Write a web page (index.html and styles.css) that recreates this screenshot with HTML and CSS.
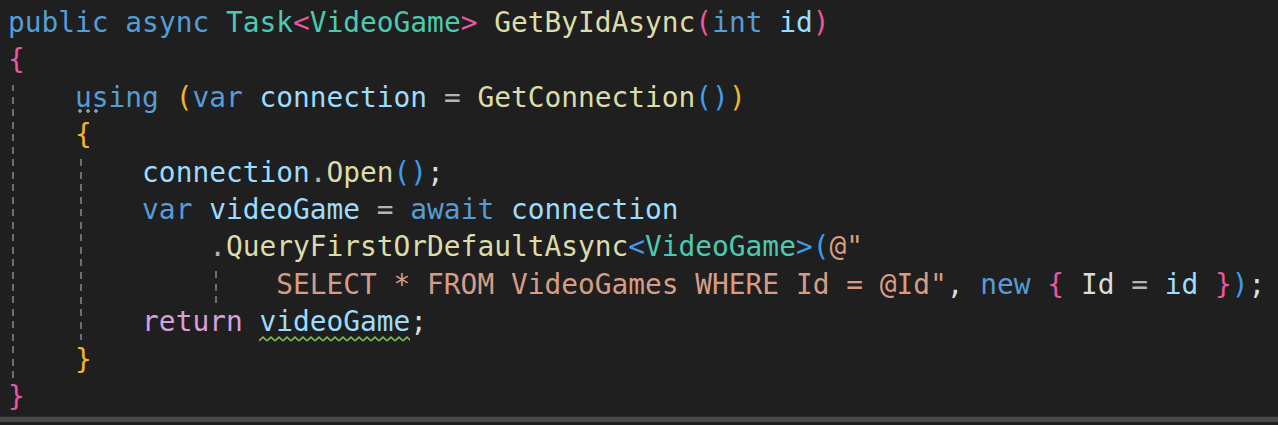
FILE: index.html
```html
<!DOCTYPE html>
<html lang="en">
<head>
  <meta charset="UTF-8" />
  <meta name="viewport" content="width=device-width, initial-scale=1.0"/>
  <title>VideoGameRepository.cs</title>
  <link rel="stylesheet" href="styles.css">
</head>
<body>

  <div class="editor">
    <!-- indent guides -->
    <div class="guide guide-1"></div>
    <div class="guide guide-2"></div>
    <div class="guide guide-3"></div>

    <div class="code">
<div class="line"><span class="kw">public</span> <span class="kw">async</span> <span class="type">Task</span><span class="b1">&lt;</span><span class="type">VideoGame</span><span class="b1">&gt;</span> <span class="fn">GetByIdAsync</span><span class="b1">(</span><span class="kw">int</span> <span class="var">id</span><span class="b1">)</span></div>
<div class="line"><span class="b1">{</span></div>
<div class="line">    <span class="kw hint">using</span> <span class="b2">(</span><span class="kw">var</span> <span class="var">connection</span> <span class="op">=</span> <span class="fn">GetConnection</span><span class="b3">()</span><span class="b2">)</span></div>
<div class="line">    <span class="b2">{</span></div>
<div class="line">        <span class="var">connection</span><span class="op">.</span><span class="fn">Open</span><span class="b3">()</span><span class="pn">;</span></div>
<div class="line">        <span class="kw">var</span> <span class="var">videoGame</span> <span class="op">=</span> <span class="kw">await</span> <span class="var">connection</span></div>
<div class="line">            <span class="op">.</span><span class="fn">QueryFirstOrDefaultAsync</span><span class="b3">&lt;</span><span class="type">VideoGame</span><span class="b3">&gt;(</span><span class="str">@"</span></div>
<div class="line">                <span class="str">SELECT * FROM VideoGames WHERE Id = @Id"</span><span class="pn">,</span> <span class="kw">new</span> <span class="b1">{</span> <span class="pn">Id</span> <span class="op">=</span> <span class="var">id</span> <span class="b1">}</span><span class="b3">)</span><span class="pn">;</span></div>
<div class="line">        <span class="ctrl">return</span> <span class="var squiggle">videoGame</span><span class="pn">;</span></div>
<div class="line">    <span class="b2">}</span></div>
<div class="line"><span class="b1">}</span></div>
    </div>
  </div>

  <div class="hscroll"></div>

</body>
</html>
```

FILE: styles.css
```css
body {
  margin: 0;
  background-color: #1f1f1f;
  overflow: hidden;
}
.editor {
  position: relative;
  height: 416px;
  padding-top: 4px;
  box-sizing: border-box;
}
.code {
  padding-left: 8px;
  font-family: "DejaVu Sans Mono", monospace;
  font-size: 27.85px;
  line-height: 37.4px;
  color: #dcdcdc;
}
.line {
  white-space: pre;
  height: 37.4px;
}

/* token colours */
.kw { color: #569cd6; }
.type { color: #4ec9b0; }
.fn { color: #dcdcaa; }
.var { color: #9cdcfe; }
.str { color: #d69d85; }
.ctrl { color: #d8a0df; }
.op { color: #b4b4b4; }
.pn { color: #dcdcdc; }
.b1 { color: #e8579f; }
.b2 { color: #f2b52c; }
.b3 { color: #3f9bec; }

/* the three dots under "using" */
.hint {
  position: relative;
}
.hint::after {
  content: "";
  position: absolute;
  left: 1px;
  bottom: 1px;
  width: 24px;
  height: 4px;
  background: radial-gradient(circle, #9a9a9a 1.5px, transparent 2px) 0 0 / 8px 4px repeat-x;
}

/* green warning squiggle */
.squiggle {
  position: relative;
}
.squiggle::after {
  content: "";
  position: absolute;
  left: 0;
  right: 0;
  bottom: -4px;
  height: 6px;
  background: url("data:image/svg+xml,%3Csvg xmlns='http://www.w3.org/2000/svg' width='8' height='6'%3E%3Cpath d='M0 4.8 L4 1.2 L8 4.8' fill='none' stroke='%2376c04f' stroke-width='1.6'/%3E%3C/svg%3E") repeat-x;
}

.guide {
  position: absolute;
  width: 2px;
  background: repeating-linear-gradient(to bottom, transparent 0 5.5px, #6f6f6f 5.5px 12.47px);
}
.guide-1 {
  left: 12px;
  top: 79px;
  height: 300px;
}
.guide-2 {
  left: 80px;
  top: 154px;
  height: 186px;
}
.guide-3 {
  left: 215px;
  top: 266px;
  height: 38px;
}

.hscroll {
  height: 5px;
  background-color: #4a4a4a;
  border-top: 1px solid #2a2a2a;
}
```
